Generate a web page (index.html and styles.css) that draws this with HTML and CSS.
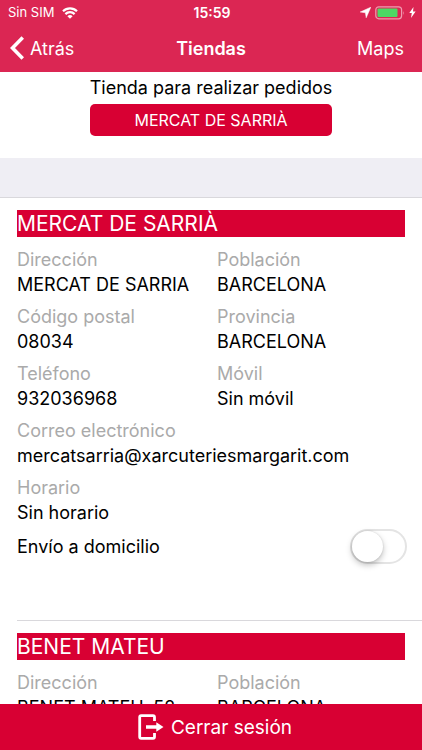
FILE: index.html
```html
<!DOCTYPE html>
<html lang="es">
<head>
<meta charset="utf-8">
<meta name="viewport" content="width=device-width, initial-scale=1">
<title>Tiendas</title>
<link rel="stylesheet" href="styles.css">
</head>
<body>
<header class="top">
  <div class="status">
    <div class="status-left">
      <span>Sin SIM</span>
      <svg width="16" height="12" viewBox="0 0 16 12" fill="none" stroke="#fff" stroke-width="2.200" aria-hidden="true">
        <path d="M1 4.200a10 10 0 0 1 14 0M3.400 7.100a6.500 6.500 0 0 1 9.200 0"/>
        <path d="M8 11.800 5.400 9.200a3.700 3.700 0 0 1 5.200 0z" fill="#fff" stroke="none"/>
      </svg>
    </div>
    <time class="clock">15:59</time>
    <div class="status-right">
      <svg width="11" height="11" viewBox="0 0 11 11" fill="#fff" aria-hidden="true"><path d="M10.800.2 6.200 10.800 5.400 5.800.2 5z" stroke="#fff" stroke-width=".5"/></svg>
      <svg width="30" height="14" viewBox="0 0 30 14" aria-hidden="true">
        <rect x=".8" y=".8" width="25.800" height="12" rx="3" fill="none" stroke="#ef9bb0" stroke-width="1.200"/>
        <rect x="2.500" y="2.500" width="20" height="8.600" rx="1" fill="#4cd964"/>
        <path d="M28 5q1.500 2 0 4z" fill="#ef9bb0"/>
      </svg>
      <svg width="7" height="11" viewBox="0 0 7 11" fill="#fff" aria-hidden="true"><path d="M4.500 0 .3 6h2.500L2 11l4.600-6.500H4z"/></svg>
    </div>
  </div>
  <nav class="nav">
    <a class="back" href="#">
      <svg width="14" height="24" viewBox="0 0 14 24" fill="none" stroke="#fff" stroke-width="3.600" aria-hidden="true"><path d="M12.800 1.500 2.500 12l10.300 10.500"/></svg>
      <span>Atrás</span>
    </a>
    <h1 class="nav-title">Tiendas</h1>
    <a class="maps" href="#">Maps</a>
  </nav>
</header>
<main class="content">
  <section class="order">
    <div class="order-box">
      <p id="order-label">Tienda para realizar pedidos</p>
      <button class="order-button" type="button" aria-describedby="order-label">MERCAT DE SARRIÀ</button>
    </div>
  </section>
  <div class="band"></div>
  <article class="store">
    <h2 class="store-name">MERCAT DE SARRIÀ</h2>
    <dl class="fields">
      <div><dt>Dirección</dt><dd>MERCAT DE SARRIA</dd></div>
      <div><dt>Población</dt><dd>BARCELONA</dd></div>
      <div><dt>Código postal</dt><dd>08034</dd></div>
      <div><dt>Provincia</dt><dd>BARCELONA</dd></div>
      <div><dt>Teléfono</dt><dd>932036968</dd></div>
      <div><dt>Móvil</dt><dd>Sin móvil</dd></div>
      <div class="wide"><dt>Correo electrónico</dt><dd>mercatsarria@xarcuteriesmargarit.com</dd></div>
      <div class="wide"><dt>Horario</dt><dd>Sin horario</dd></div>
    </dl>
    <div class="delivery">
      <label for="delivery">Envío a domicilio</label>
      <input class="switch" id="delivery" type="checkbox" role="switch">
    </div>
  </article>
  <article class="store">
    <h2 class="store-name">BENET MATEU</h2>
    <dl class="fields">
      <div><dt>Dirección</dt><dd>BENET MATEU, 52</dd></div>
      <div><dt>Población</dt><dd>BARCELONA</dd></div>
    </dl>
  </article>
</main>
<footer class="footer">
  <button class="logout" type="button">
    <svg width="26" height="26" viewBox="0 0 26 26" fill="none" stroke="#fff" stroke-width="2.800" aria-hidden="true">
      <path d="M16.500 7V3.200a1.500 1.500 0 0 0-1.500-1.500H3.200a1.500 1.500 0 0 0-1.500 1.500v19.600a1.500 1.500 0 0 0 1.500 1.500H15a1.500 1.500 0 0 0 1.500-1.500V19"/>
      <path d="M8 11.200h10.300V8.200L25.500 13l-7.200 4.800v-3H8z" fill="#fff" stroke="none"/>
    </svg>
    <span>Cerrar sesión</span>
  </button>
</footer>
</body>
</html>
```
FILE: styles.css
```css
* {
  box-sizing: border-box;
}

body {
  margin: 0;
  height: 100vh;
  display: flex;
  flex-direction: column;
  background: #fff;
  color: #000;
  font-family: Inter, "Liberation Sans", sans-serif;
  font-size: 18px;
  line-height: 25px;
}

h1, h2, p, dl, dd {
  margin: 0;
}

a {
  color: inherit;
  text-decoration: none;
}

button {
  border: 0;
  color: #fff;
  background: #d80033;
  font-family: inherit;
}

.top {
  background: #db2653;
  color: #fff;
}

.status {
  display: grid;
  grid-template-columns: 1fr auto 1fr;
  align-items: center;
  height: 24px;
  padding: 0 6px 0 8px;
  font-size: 13px;
}

.status-left,
.status-right {
  display: flex;
  align-items: center;
  gap: 8px;
}

.status-right {
  justify-content: flex-end;
  gap: 4px;
}

.clock {
  font-size: 14px;
  font-weight: 600;
}

.nav {
  display: grid;
  grid-template-columns: 1fr auto 1fr;
  align-items: center;
  height: 48px;
  padding: 0 10px;
}

.back {
  display: flex;
  align-items: center;
  gap: 6px;
}

.nav-title {
  font-size: 18px;
  font-weight: 600;
}

.maps {
  justify-self: end;
  padding-right: 8px;
}

.content {
  flex: 1;
  min-height: 0;
  overflow: hidden;
}

.order {
  display: flex;
  justify-content: center;
  padding: 3px 16px 22px;
}

.order-box {
  display: grid;
  gap: 4px;
}

.order-button {
  height: 32px;
  border-radius: 5px;
  font-size: 16px;
}

.band {
  height: 40px;
  background: #efeef4;
  border-bottom: 1px solid #d9d8dc;
}

.store {
  padding: 12px 17px 0;
}

.store + .store {
  margin-left: 17px;
  padding-left: 0;
  border-top: 1px solid #d9d8dc;
}

.store-name {
  background: #d80033;
  color: #fff;
  font-size: 21px;
  font-weight: 400;
  line-height: 27px;
}

.fields {
  display: grid;
  grid-template-columns: 200px 1fr;
  row-gap: 7px;
  padding-top: 10px;
}

.wide {
  grid-column: 1 / -1;
}

dt {
  color: #aaa;
}

.delivery {
  display: flex;
  align-items: center;
  justify-content: space-between;
  margin-right: -2px;
  padding: 4px 0 56px;
}

.switch {
  appearance: none;
  width: 57px;
  height: 35px;
  margin: 0;
  border: 2px solid #e4e4e4;
  border-radius: 18px;
  background: #fff;
}

.switch::before {
  content: "";
  display: block;
  width: 31px;
  height: 31px;
  border-radius: 50%;
  background: #fff;
  box-shadow: 0 3px 6px rgba(0, 0, 0, 0.25), 0 0 2px rgba(0, 0, 0, 0.15);
}

.switch:checked {
  border-color: #4cd964;
  background: #4cd964;
}

.switch:checked::before {
  margin-left: auto;
}

.footer {
  display: flex;
  background: #d80033;
}

.logout {
  flex: 1;
  display: flex;
  align-items: center;
  justify-content: center;
  gap: 7px;
  height: 46px;
  padding: 0 0 0 8px;
  font-size: 19px;
}
```
